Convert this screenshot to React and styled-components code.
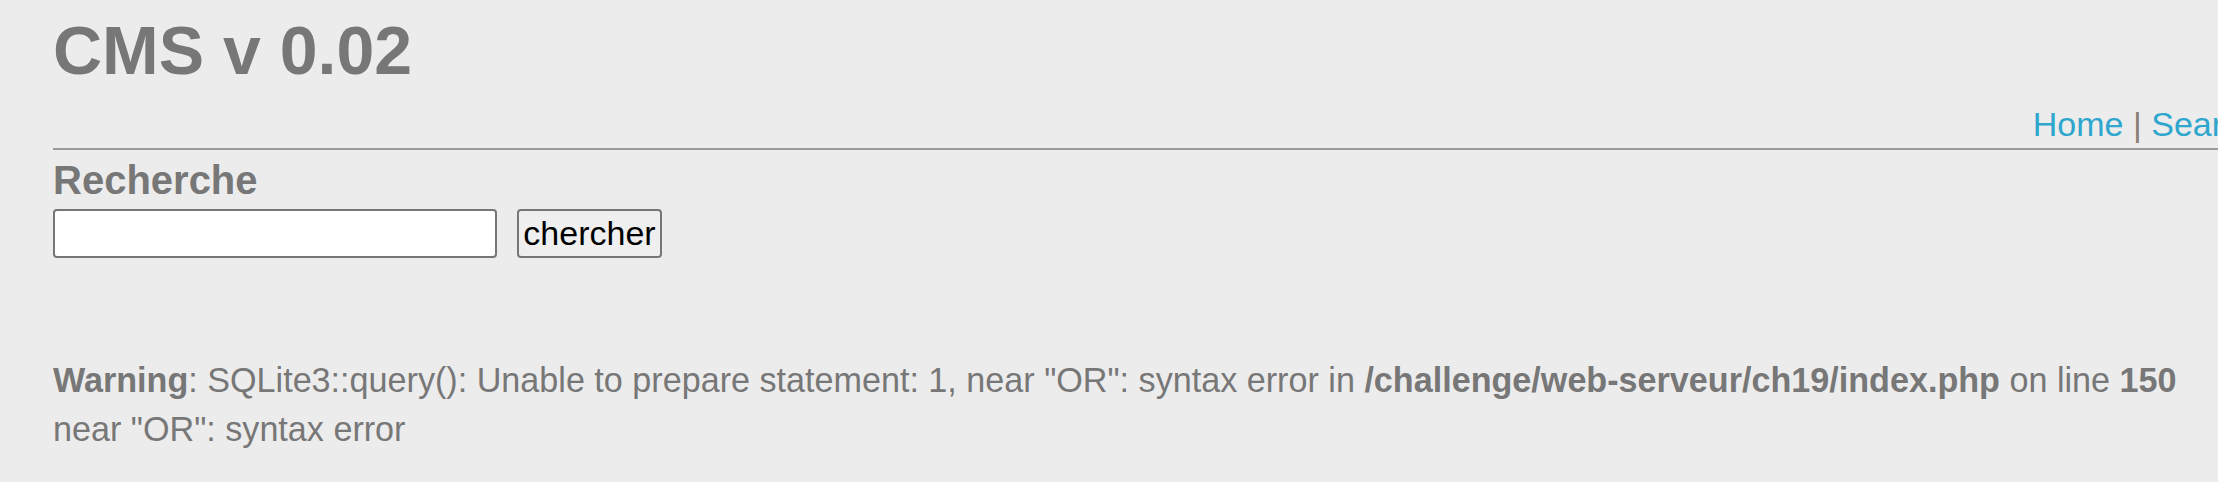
import styled, { createGlobalStyle } from 'styled-components';

const GlobalStyle = createGlobalStyle`
  html, body {
    margin: 0;
    padding: 0;
    background: #ececec;
    overflow: hidden;
  }
  body {
    font-family: "Liberation Sans", Arial, sans-serif;
    color: #777777;
  }
`;

const Page = styled.div`
  display: flex;
  flex-direction: column;
  width: 2206px;
  padding-left: 53px;
  font-size: 34px;
`;

const Title = styled.h1`
  margin: 16px 0 0;
  font-size: 68px;
  line-height: 1;
  font-weight: 700;
  color: #777777;
`;

const Nav = styled.nav`
  margin-top: 20px;
  text-align: right;
  line-height: 40px;
  white-space: nowrap;
`;

const NavLink = styled.a`
  color: #2ea6ce;
  text-decoration: none;
`;

const Sep = styled.span`
  color: #8a7f78;
`;

const Rule = styled.hr`
  margin: 4px 0 0;
  border: 0;
  border-top: 2px solid #9a9a9a;
  height: 0;
`;

const Heading = styled.h3`
  margin: 7px 0 0;
  font-size: 40px;
  line-height: 46px;
  font-weight: 700;
  color: #777777;
`;

const SearchForm = styled.form`
  display: flex;
  align-items: stretch;
  gap: 20px;
  margin-top: 6px;
  height: 49px;
`;

const Field = styled.input`
  box-sizing: border-box;
  width: 444px;
  height: 49px;
  border: 2px solid #767676;
  border-radius: 4px;
  background: #ffffff;
  font: inherit;
  padding: 0 4px;
`;

const Button = styled.button`
  box-sizing: border-box;
  width: 145px;
  height: 49px;
  border: 2px solid #767676;
  border-radius: 4px;
  background: #efefef;
  color: #000000;
  font-family: "Liberation Sans", Arial, sans-serif;
  font-size: 34px;
  padding: 0 4px;
`;

const Message = styled.div`
  margin-top: 98px;
  font-size: 34.15px;
  line-height: 49px;
  white-space: nowrap;
`;

export default function App() {
  return (
    <>
      <GlobalStyle />
      <Page>
        <Title>CMS v 0.02</Title>
        <Nav>
          <NavLink href="#">Home</NavLink> <Sep>|</Sep> <NavLink href="#">Search</NavLink>
        </Nav>
        <Rule />
        <Heading>Recherche</Heading>
        <SearchForm onSubmit={(e) => e.preventDefault()}>
          <Field type="text" />
          <Button type="submit">chercher</Button>
        </SearchForm>
        <Message>
          <b>Warning</b>: SQLite3::query(): Unable to prepare statement: 1, near "OR": syntax error in{' '}
          <b>/challenge/web-serveur/ch19/index.php</b> on line <b>150</b>
          <br />
          near "OR": syntax error
        </Message>
      </Page>
    </>
  );
}
